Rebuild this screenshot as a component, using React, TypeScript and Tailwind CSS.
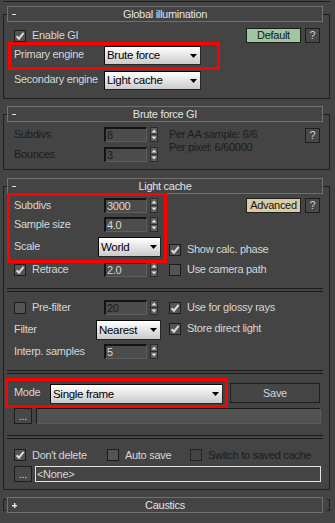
import React from "react";

function Check({ on = false, dim = false }: { on?: boolean; dim?: boolean }) {
  return (
    <div
      className={
        dim
          ? "w-[12px] h-[12px] shrink-0 border border-[#222222] bg-[#444444]"
          : "w-[12px] h-[12px] shrink-0 border border-[#1c1c1c] bg-[#545454] flex items-center justify-center"
      }
    >
      {on && (
        <svg width="10" height="10" viewBox="0 0 10 10">
          <path d="M1.6 5.2 L4 7.7 L8.6 1.9" stroke="#dadada" strokeWidth="2" fill="none" />
        </svg>
      )}
    </div>
  );
}

function Arrows() {
  return (
    <svg width="8" height="15" viewBox="0 0 8 15" className="ml-[3px] shrink-0">
      <rect x="0.5" y="0.5" width="7" height="14" fill="#5c5c5c" stroke="#2c2c2c" />
      <line x1="0" y1="7.5" x2="8" y2="7.5" stroke="#2c2c2c" />
      <polygon points="1.5,5.5 4,2.5 6.5,5.5" fill="#e2e2e2" />
      <polygon points="1.5,9.5 4,12.5 6.5,9.5" fill="#e2e2e2" />
    </svg>
  );
}

function Spin({ value, dim = false }: { value: string; dim?: boolean }) {
  return (
    <div className="flex items-center shrink-0">
      <div
        className={
          dim
            ? "w-[43px] h-[15px] border-t-2 border-l-2 border-r border-b border-t-[#141414] border-l-[#141414] border-r-[#5e5e5e] border-b-[#5e5e5e] bg-[#4c4c4c] pl-[1px] leading-[12px] text-[#1c1c1c]"
            : "w-[43px] h-[15px] border-t-2 border-l-2 border-r border-b border-t-[#141414] border-l-[#141414] border-r-[#5e5e5e] border-b-[#5e5e5e] bg-[#4c4c4c] pl-[1px] leading-[12px] text-[#d8d8d8]"
        }
      >
        {value}
      </div>
      <Arrows />
    </div>
  );
}

function Drop({ text, cls }: { text: string; cls: string }) {
  return (
    <div
      className={`${cls} shrink-0 flex items-center border border-t-[#080808] border-l-[#080808] border-r-[#262626] border-b-[#262626] bg-linear-to-b from-[#ffffff] to-[#cbcbcb] pl-[2px] pr-[3px] text-[#000000] text-[11.5px]`}
    >
      <span className="whitespace-nowrap">{text}</span>
      <svg className="ml-auto shrink-0" width="7" height="4" viewBox="0 0 7 4">
        <polygon points="0,0 7,0 3.5,4" fill="#000000" />
      </svg>
    </div>
  );
}

function Btn({ children, cls }: { children: React.ReactNode; cls: string }) {
  return (
    <div className={`${cls} shrink-0 flex items-center justify-center border border-[#1e1e1e] whitespace-nowrap`}>
      {children}
    </div>
  );
}

function Header({ title, plus = false }: { title: string; plus?: boolean }) {
  return (
    <div className="w-[316px] h-[16px] shrink-0 border border-[#707070] bg-[#444444] grid grid-cols-[24px_1fr_24px] items-center text-[#e2e2e2]">
      <div className="pl-[4px] flex items-center">
        {plus ? (
          <svg width="5" height="5" viewBox="0 0 5 5">
            <rect x="2" y="0" width="1.4" height="5" fill="#e8e8e8" />
            <rect x="0" y="2" width="5" height="1.4" fill="#e8e8e8" />
          </svg>
        ) : (
          <div className="w-[4px] h-[1px] bg-[#e2e2e2]" />
        )}
      </div>
      <div className="text-center leading-[14px] whitespace-nowrap">{title}</div>
      <div />
    </div>
  );
}

function Sep({ mt }: { mt: string }) {
  return <div className={`${mt} ml-[3px] mr-[6px] h-[4px] border-t border-b border-[#1a1a1a]`} />;
}

const dimText = "text-[#1c1c1c]";

export default function App() {
  return (
    <div className="w-[335px] h-[523px] bg-[#444444] overflow-hidden relative font-['Liberation_Sans',Arial,sans-serif] text-[11px] tracking-[-0.3px] text-[#d6d6d6] leading-[13px] flex flex-col">
      <div className="mt-[1px] ml-[3px] w-[327px] h-[1px] bg-[#1e1e1e] shrink-0" />

      {/* Global illumination */}
      <div className="mt-[12px] ml-[3px] w-[327px] border border-[#1e1e1e] flex flex-col shrink-0">
        <div className="-mt-[9px] ml-[3px]">
          <Header title="Global illumination" />
        </div>
        <div className="h-[76px] flex flex-col">
          <div className="mt-[6px] ml-[10px] mr-[9px] h-[15px] flex items-center">
            <Check on />
            <span className="ml-[6px]">Enable GI</span>
            <Btn cls="ml-auto w-[55px] h-[15px] bg-[#a0c8a0] text-[#161616]">Default</Btn>
            <Btn cls="ml-[4px] w-[15px] h-[15px] bg-[#484848] text-[#d0d0d0]">?</Btn>
          </div>
          <div className="mt-[3px] ml-[10px] h-[19px] flex items-center">
            <span className="w-[90px] shrink-0 whitespace-nowrap -mt-[2px]">Primary engine</span>
            <Drop text="Brute force" cls="w-[97px] h-[19px]" />
          </div>
          <div className="mt-[6px] ml-[10px] h-[19px] flex items-center">
            <span className="w-[90px] shrink-0 whitespace-nowrap -mt-[2px]">Secondary engine</span>
            <Drop text="Light cache" cls="w-[97px] h-[19px]" />
          </div>
        </div>
      </div>

      {/* Brute force GI */}
      <div className="mt-[15px] ml-[3px] w-[327px] border border-[#1e1e1e] flex flex-col shrink-0">
        <div className="-mt-[9px] ml-[3px]">
          <Header title="Brute force GI" />
        </div>
        <div className="h-[47px] ml-[10px] mr-[9px] flex">
          <div className="flex flex-col">
            <div className="mt-[5px] h-[15px] flex items-center">
              <span className={`w-[90px] shrink-0 ${dimText}`}>Subdivs</span>
              <Spin value="8" dim />
            </div>
            <div className="mt-[5px] h-[15px] flex items-center">
              <span className={`w-[90px] shrink-0 ${dimText}`}>Bounces</span>
              <Spin value="3" dim />
            </div>
          </div>
          <div className={`ml-[11px] mt-[6px] leading-[12.5px] whitespace-nowrap ${dimText}`}>
            <div>Per AA sample: 6/6</div>
            <div>Per pixel: 6/60000</div>
          </div>
          <Btn cls="ml-auto mt-[6px] w-[15px] h-[15px] bg-[#484848] text-[#d0d0d0]">?</Btn>
        </div>
      </div>

      {/* Light cache */}
      <div className="mt-[16px] ml-[3px] w-[327px] border border-[#1e1e1e] flex flex-col shrink-0">
        <div className="-mt-[9px] ml-[3px]">
          <Header title="Light cache" />
        </div>
        <div className="h-[295px] flex flex-col">
          <div className="mt-[4px] ml-[10px] mr-[9px] h-[15px] flex items-center">
            <span className="w-[90px] shrink-0">Subdivs</span>
            <Spin value="3000" />
            <Btn cls="ml-auto w-[55px] h-[15px] bg-[#d9cba5] text-[#161616]">Advanced</Btn>
            <Btn cls="ml-[4px] w-[15px] h-[15px] bg-[#484848] text-[#d0d0d0]">?</Btn>
          </div>
          <div className="mt-[4px] ml-[10px] h-[15px] flex items-center">
            <span className="w-[90px] shrink-0">Sample size</span>
            <Spin value="4.0" />
          </div>
          <div className="mt-[5px] ml-[10px] h-[20px] flex items-start">
            <span className="w-[84px] shrink-0 self-center -mt-[2px]">Scale</span>
            <Drop text="World" cls="w-[63px] h-[20px]" />
            <div className="ml-[8px] mt-[6px] flex items-center">
              <Check on />
              <span className="ml-[6px] whitespace-nowrap">Show calc. phase</span>
            </div>
          </div>
          <div className="mt-[5px] ml-[10px] h-[15px] flex items-center">
            <div className="w-[90px] shrink-0 flex items-center">
              <Check on />
              <span className="ml-[6px]">Retrace</span>
            </div>
            <Spin value="2.0" />
            <div className="ml-[11px] flex items-center">
              <Check />
              <span className="ml-[6px] whitespace-nowrap">Use camera path</span>
            </div>
          </div>

          <Sep mt="mt-[11px]" />

          <div className="mt-[8px] ml-[10px] h-[15px] flex items-center">
            <div className="w-[90px] shrink-0 flex items-center">
              <Check />
              <span className="ml-[6px]">Pre-filter</span>
            </div>
            <Spin value="20" dim />
            <div className="ml-[11px] flex items-center">
              <Check on />
              <span className="ml-[6px] whitespace-nowrap">Use for glossy rays</span>
            </div>
          </div>
          <div className="mt-[5px] ml-[10px] h-[20px] flex items-start">
            <span className="w-[82px] shrink-0 self-center -mt-[2px]">Filter</span>
            <Drop text="Nearest" cls="w-[65px] h-[20px]" />
            <div className="ml-[8px] mt-[2px] flex items-center">
              <Check on />
              <span className="ml-[6px] whitespace-nowrap">Store direct light</span>
            </div>
          </div>
          <div className="mt-[4px] ml-[10px] h-[15px] flex items-center">
            <span className="w-[90px] shrink-0 whitespace-nowrap">Interp. samples</span>
            <Spin value="5" />
          </div>

          <Sep mt="mt-[11px]" />

          <div className="mt-[9px] ml-[10px] h-[21px] flex items-start">
            <span className="w-[36px] shrink-0 self-center -mt-[3px]">Mode</span>
            <div className="mt-[1px]">
              <Drop text="Single frame" cls="w-[173px] h-[20px]" />
            </div>
            <Btn cls="ml-[7px] w-[90px] h-[20px] bg-[#454545] text-[#d4d4d4]">Save</Btn>
          </div>
          <div className="mt-[4px] ml-[10px] h-[16px] flex items-center">
            <Btn cls="w-[18px] h-[16px] bg-[#484848] text-[#d0d0d0] leading-[10px]">...</Btn>
            <div className="ml-[4px] w-[285px] h-[16px] shrink-0 border-t border-l border-r border-b border-t-[#1a1a1a] border-l-[#1a1a1a] border-r-[#5a5a5a] border-b-[#5a5a5a] bg-[#525252]" />
          </div>

          <Sep mt="mt-[11px]" />

          <div className="mt-[10px] ml-[10px] h-[12px] flex items-center whitespace-nowrap">
            <div className="w-[93px] shrink-0 flex items-center">
              <Check on />
              <span className="ml-[6px]">Don't delete</span>
            </div>
            <div className="w-[83px] shrink-0 flex items-center">
              <Check />
              <span className="ml-[6px]">Auto save</span>
            </div>
            <div className="flex items-center">
              <Check dim />
              <span className={`ml-[6px] ${dimText}`}>Switch to saved cache</span>
            </div>
          </div>
          <div className="mt-[5px] ml-[10px] h-[16px] flex items-center">
            <Btn cls="w-[18px] h-[16px] bg-[#484848] text-[#d0d0d0] leading-[10px]">...</Btn>
            <div className="ml-[3px] w-[286px] h-[16px] shrink-0 border border-[#e4e4e4] bg-[#444444] pl-[1px] leading-[14px] text-[#d6d6d6]">
              &lt;None&gt;
            </div>
          </div>
        </div>
      </div>

      {/* Caustics (closed) */}
      <div className="mt-[7px] ml-[3px] flex items-center shrink-0">
        <div className="w-[3px] h-[12px] border-l border-t border-b border-[#1e1e1e]" />
        <div className="ml-[1px]">
          <Header title="Caustics" plus />
        </div>
        <div className="ml-[4px] w-[3px] h-[12px] border-r border-t border-b border-[#1e1e1e]" />
      </div>

      {/* red annotation boxes */}
      <div className="absolute left-[8px] top-[42px] w-[212px] h-[28px] border-[3px] border-[#ff0000] pointer-events-none" />
      <div className="absolute left-[7px] top-[193px] w-[160px] h-[70px] border-[3px] border-[#ff0000] pointer-events-none" />
      <div className="absolute left-[5px] top-[378px] w-[223px] h-[30px] border-[3px] border-[#ff0000] pointer-events-none" />
    </div>
  );
}
